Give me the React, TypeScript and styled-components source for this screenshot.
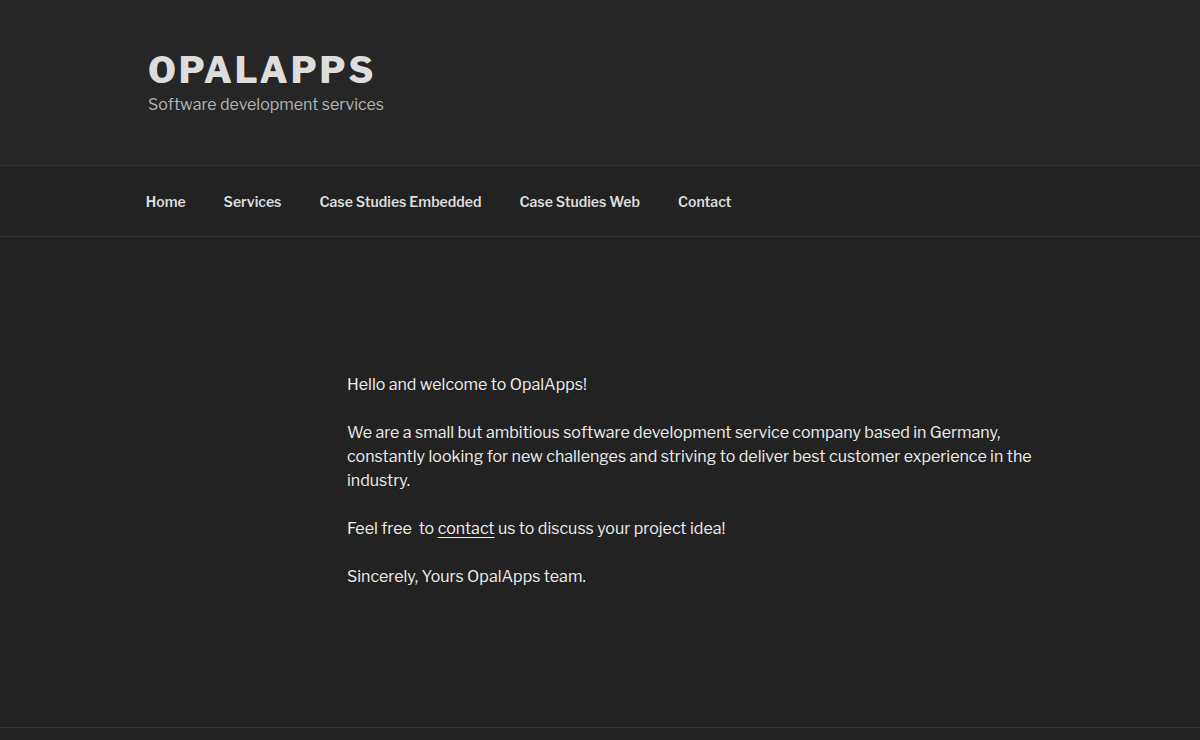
import React from "react";
import styled, { createGlobalStyle } from "styled-components";

const Global = createGlobalStyle`
  html, body { margin: 0; padding: 0; background: #222; }
  body {
    font-family: "Libre Franklin", Inter, "Liberation Sans", sans-serif;
    color: #eee;
  }
  * { box-sizing: border-box; }
`;

const Page = styled.div`
  min-height: 740px;
  background: #222;
  display: flex;
  flex-direction: column;
`;

const Header = styled.header`
  background: #262626;
  height: 165px;
`;

const Wrap = styled.div`
  max-width: 1000px;
  margin: 0 auto;
  padding: 0 48px;
`;

const Branding = styled(Wrap)`
  padding-top: 48px;
`;

const SiteTitle = styled.h1`
  margin: 0;
  font-size: 36px;
  line-height: 44px;
  font-weight: 800;
  letter-spacing: 0.08em;
  text-transform: uppercase;
  color: #ddd;
`;

const Tagline = styled.p`
  margin: 1px 0 0;
  font-size: 16px;
  line-height: 24px;
  color: #b4b4b4;
  font-weight: 400;
`;

const NavBar = styled.nav`
  background: #222;
  border-top: 1px solid #333;
  border-bottom: 1px solid #333;
  height: 72px;
`;

const NavList = styled.ul`
  list-style: none;
  margin: 0 auto;
  max-width: 1000px;
  padding: 0 45.8px;
  height: 100%;
  display: flex;
  align-items: center;
  gap: 38px;
`;

const NavItem = styled.li`
  font-size: 14px;
  font-weight: 600;
  color: #ddd;
`;

const Main = styled.main`
  flex: 1;
  padding-top: 136px;
`;

const Content = styled(Wrap)`
  padding-left: 247px;
`;

const Para = styled.p`
  margin: 0 0 24px;
  font-size: 16px;
  line-height: 24px;
  color: #eee;
  max-width: 700px;
`;

const Link = styled.a`
  color: #eee;
  text-decoration: underline;
  text-underline-offset: 3px;
`;

const Footer = styled.footer`
  border-top: 1px solid #333;
  height: 13px;
`;

export default function App() {
  return (
    <Page>
      <Global />
      <Header>
        <Branding>
          <SiteTitle>OpalApps</SiteTitle>
          <Tagline>Software development services</Tagline>
        </Branding>
      </Header>
      <NavBar>
        <NavList>
          <NavItem>Home</NavItem>
          <NavItem>Services</NavItem>
          <NavItem>Case Studies Embedded</NavItem>
          <NavItem>Case Studies Web</NavItem>
          <NavItem>Contact</NavItem>
        </NavList>
      </NavBar>
      <Main>
        <Content>
          <Para>Hello and welcome to OpalApps!</Para>
          <Para>
            We are a small but ambitious software development service company based in Germany,
            constantly looking for new challenges and striving to deliver best customer experience
            in the industry.
          </Para>
          <Para>
            Feel free&nbsp; to <Link href="#">contact</Link> us to discuss your project idea!
          </Para>
          <Para>Sincerely, Yours OpalApps team.</Para>
        </Content>
      </Main>
      <Footer />
    </Page>
  );
}
